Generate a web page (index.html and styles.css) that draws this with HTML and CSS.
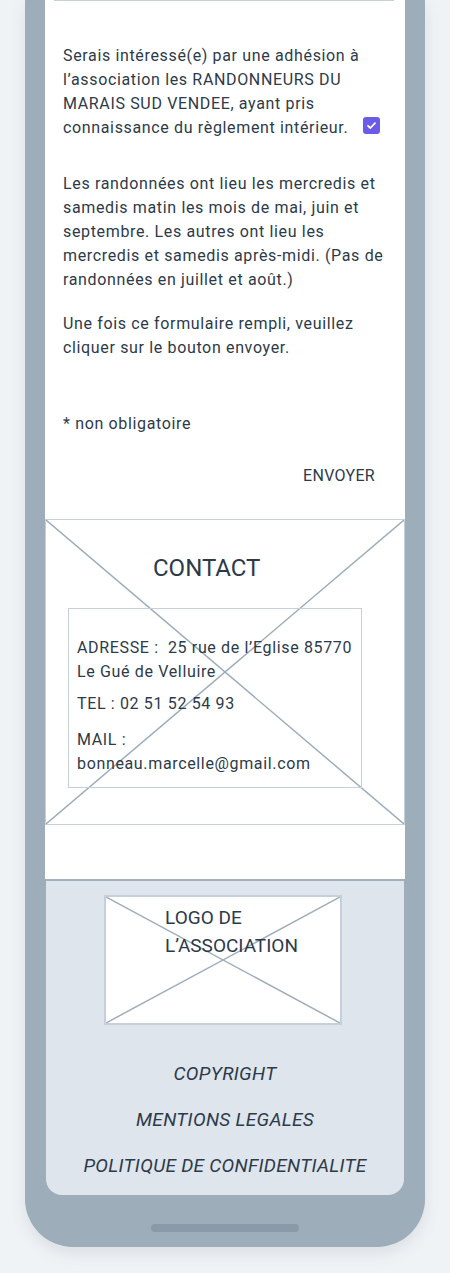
FILE: index.html
```html
<!DOCTYPE html>
<html lang="fr">
<head>
<meta charset="utf-8">
<title>Adhésion</title>
<link rel="stylesheet" href="styles.css">
</head>
<body>
<div class="phone">
  <div class="screen">
    <div class="field-line"></div>
    <div class="content">
      <p class="consent">Serais intéressé(e) par une adhésion à l’association les RANDONNEURS DU MARAIS SUD VENDEE, ayant pris connaissance du règlement intérieur.<span class="check"><svg viewBox="0 0 17 17" width="17" height="17"><path d="M5 8.8 L7.4 11 L12 6.2" fill="none" stroke="#fff" stroke-width="1.8" stroke-linecap="round" stroke-linejoin="round"/></svg></span></p>
      <p class="info">Les randonnées ont lieu les mercredis et samedis matin les mois de mai, juin et septembre. Les autres ont lieu les mercredis et samedis après-midi. (Pas de randonnées en juillet et août.)</p>
      <p class="info2">Une fois ce formulaire rempli, veuillez cliquer sur le bouton envoyer.</p>
      <p class="note">* non obligatoire</p>
      <div class="actions"><span class="send">ENVOYER</span></div>
    </div>
    <section class="contact">
      <svg class="cross" viewBox="0 0 100 100" preserveAspectRatio="none"><line x1="0" y1="0" x2="100" y2="100" vector-effect="non-scaling-stroke"/><line x1="100" y1="0" x2="0" y2="100" vector-effect="non-scaling-stroke"/></svg>
      <h2 class="contact-title">CONTACT</h2>
      <div class="contact-box">
        <p class="c-line">ADRESSE :&nbsp; 25 rue de l’Eglise 85770 Le Gué de Velluire</p>
        <p class="c-line tel">TEL : 02 51 52 54 93</p>
        <p class="c-line mail">MAIL : bonneau.marcelle@gmail.com</p>
      </div>
    </section>
    <div class="spacer"></div>
  </div>
  <footer class="footer">
    <div class="logo">
      <svg class="cross" viewBox="0 0 100 100" preserveAspectRatio="none"><line x1="0" y1="0" x2="100" y2="100" vector-effect="non-scaling-stroke"/><line x1="100" y1="0" x2="0" y2="100" vector-effect="non-scaling-stroke"/></svg>
      <span class="logo-text">LOGO DE<br>L’ASSOCIATION</span>
    </div>
    <nav class="links">
      <a class="link">COPYRIGHT</a>
      <a class="link">MENTIONS LEGALES</a>
      <a class="link">POLITIQUE DE CONFIDENTIALITE</a>
    </nav>
  </footer>
  <div class="home-bar"></div>
</div>
</body>
</html>
```

FILE: styles.css
```css
* { box-sizing: border-box; }
html, body { margin: 0; padding: 0; }
body {
  background: #f0f3f6;
  font-family: Roboto, "Noto Sans", sans-serif;
  color: #2d3a49;
  width: 450px;
  height: 1273px;
  overflow: hidden;
}
.phone {
  margin-left: 25px;
  width: 400px;
  background: #9dadba;
  border-radius: 0 0 48px 48px;
  padding: 0 20px 15px;
  box-shadow: 0 6px 16px rgba(60, 80, 100, 0.12);
}
.screen {
  background: #fff;
}
.field-line {
  height: 1px;
  border-top: 1px solid #c5d0da;
  margin: 0 11px 0 9px;
}
.content {
  padding: 43px 18px 31px;
  font-size: 16px;
  line-height: 24px;
  letter-spacing: 0.65px;
}
.content p { margin: 0; }
.check {
  display: inline-block;
  width: 17px;
  height: 17px;
  border-radius: 3px;
  background: #6a5ce6;
  margin-left: 15px;
  vertical-align: -1px;
}
.check svg { display: block; }
.info { margin-top: 32px !important; }
.info2 { margin-top: 20px !important; }
.note { margin-top: 52px !important; }
.actions {
  margin-top: 28px;
  display: flex;
  justify-content: flex-end;
  padding-right: 12px;
  letter-spacing: 0.3px;
}
.contact {
  position: relative;
  border: 1px solid #c5d0da;
  height: 306px;
  padding-top: 1px;
}
.cross {
  position: absolute;
  inset: 0;
  width: 100%;
  height: 100%;
  stroke: #9dadba;
  stroke-width: 1.5;
}
.contact-title {
  position: relative;
  margin: 33px 0 0 107px;
  font-size: 24px;
  line-height: 28px;
  font-weight: 400;
}
.contact-box {
  position: relative;
  margin: 26px 0 0 22px;
  width: 294px;
  border: 1.5px solid #c5d0da;
  padding: 27px 4px 11px 8px;
  font-size: 16px;
  line-height: 24px;
  letter-spacing: 0.65px;
}
.c-line { margin: 0; }
.tel { margin-top: 8px; }
.mail { margin-top: 12px; }
.spacer { height: 54px; }
.footer {
  background: #dfe5ed;
  border-top: 2px solid #a3b1be;
  margin: 0 1px;
  padding: 14px 0 15px;
  border-radius: 0 0 16px 16px;
}
.logo {
  position: relative;
  margin-left: 58px;
  width: 238px;
  height: 130px;
  background: #fff;
  border: 2px solid #c5d0da;
}
.logo-text {
  position: relative;
  display: block;
  padding: 7px 0 0 59px;
  font-size: 19px;
  line-height: 28px;
}
.links {
  display: flex;
  flex-direction: column;
  align-items: center;
  gap: 18px;
  margin-top: 35px;
  font-style: italic;
  font-size: 19px;
  line-height: 28px;
  letter-spacing: 0.3px;
}
.home-bar {
  width: 148px;
  height: 8px;
  border-radius: 4px;
  background: #8a9aa8;
  margin: 29px auto 0;
}
```
